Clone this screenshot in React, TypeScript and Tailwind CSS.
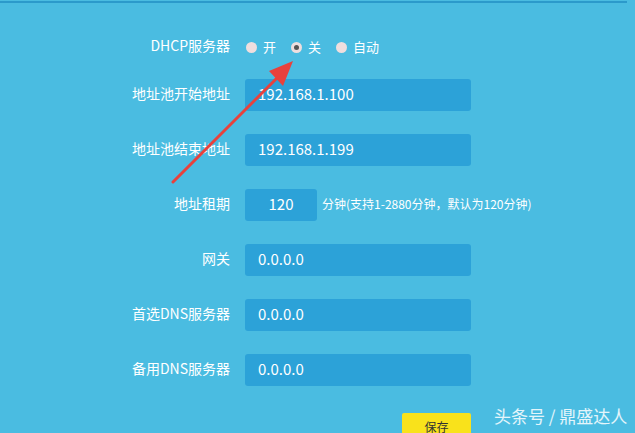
import React from 'react';

const FONT = { fontFamily: '"Noto Sans CJK SC", "Open Sans", sans-serif' };

const FIELDS = [
  { label: '地址池开始地址', value: '192.168.1.100' },
  { label: '地址池结束地址', value: '192.168.1.199' },
] as const;

const DNS_FIELDS = [
  { label: '网关', value: '0.0.0.0' },
  { label: '首选DNS服务器', value: '0.0.0.0' },
  { label: '备用DNS服务器', value: '0.0.0.0' },
] as const;

const MODES = ['开', '关', '自动'] as const;

const Row: React.FC<{ label: string; children: React.ReactNode }> = ({ label, children }) => (
  <div className="flex h-[32px] items-center">
    <div className="w-[230px] shrink-0 pb-[3px] text-right text-[14px] text-white">{label}</div>
    <div className="ml-[15px] flex items-center">{children}</div>
  </div>
);

const Field: React.FC<{ value: string }> = ({ value }) => (
  <div className="flex h-[32px] w-[226px] items-center rounded-[3px] bg-[#2ca2d8] pb-[1px] pl-[13px] text-[15px] text-white">
    {value}
  </div>
);

export default function App() {
  const [mode, setMode] = React.useState<(typeof MODES)[number]>('关');

  return (
    <div className="relative h-[433px] w-[635px] overflow-hidden bg-[#4abce1]" style={FONT}>
      <div className="mt-[1px] mr-[8px] h-[2px] bg-[#2b9acb]" />

      <div className="mt-[28px] flex flex-col">
        <Row label="DHCP服务器">
          <div className="ml-[1px] flex items-center text-[13px] text-white">
            {MODES.map((m) => (
              <button
                key={m}
                type="button"
                onClick={() => setMode(m)}
                className="mr-[15px] flex items-center gap-[6px] last:mr-0"
              >
                <span className="flex h-[11px] w-[11px] items-center justify-center rounded-full bg-[#efdede]">
                  {mode === m && <span className="h-[5px] w-[5px] rounded-full bg-[#555]" />}
                </span>
                {m}
              </button>
            ))}
          </div>
        </Row>

        <div className="mt-[16px] flex flex-col gap-[23px]">
          {FIELDS.map((f) => (
            <Row key={f.label} label={f.label}>
              <Field value={f.value} />
            </Row>
          ))}
          <Row label="地址租期">
            <div className="flex h-[32px] w-[72px] items-center justify-center rounded-[3px] bg-[#2ca2d8] pb-[1px] text-[15px] text-white">
              120
            </div>
            <span className="ml-[5px] pb-[2px] text-[12px] text-white">分钟(支持1-2880分钟，默认为120分钟)</span>
          </Row>
          {DNS_FIELDS.map((f) => (
            <Row key={f.label} label={f.label}>
              <Field value={f.value} />
            </Row>
          ))}
        </div>

        <div className="mt-[27px] flex">
          <button
            type="button"
            className="ml-[402px] h-[26px] w-[69px] rounded-t-[2px] bg-[#f9e21b] pt-[1px] text-[12px] text-[#333]"
          >
            保存
          </button>
        </div>
      </div>

      {/* watermark */}
      <span className="absolute left-[494px] top-[403px] text-[17px] text-white/85">头条号 / 鼎盛达人</span>

      {/* red annotation arrow */}
      <svg className="pointer-events-none absolute left-0 top-0" width="635" height="433">
        <line x1="173" y1="182" x2="282" y2="73" stroke="#e8413c" strokeWidth="3" strokeLinecap="round" />
        <polygon points="293,61 269,71 283,86" fill="#e8413c" />
      </svg>
    </div>
  );
}
